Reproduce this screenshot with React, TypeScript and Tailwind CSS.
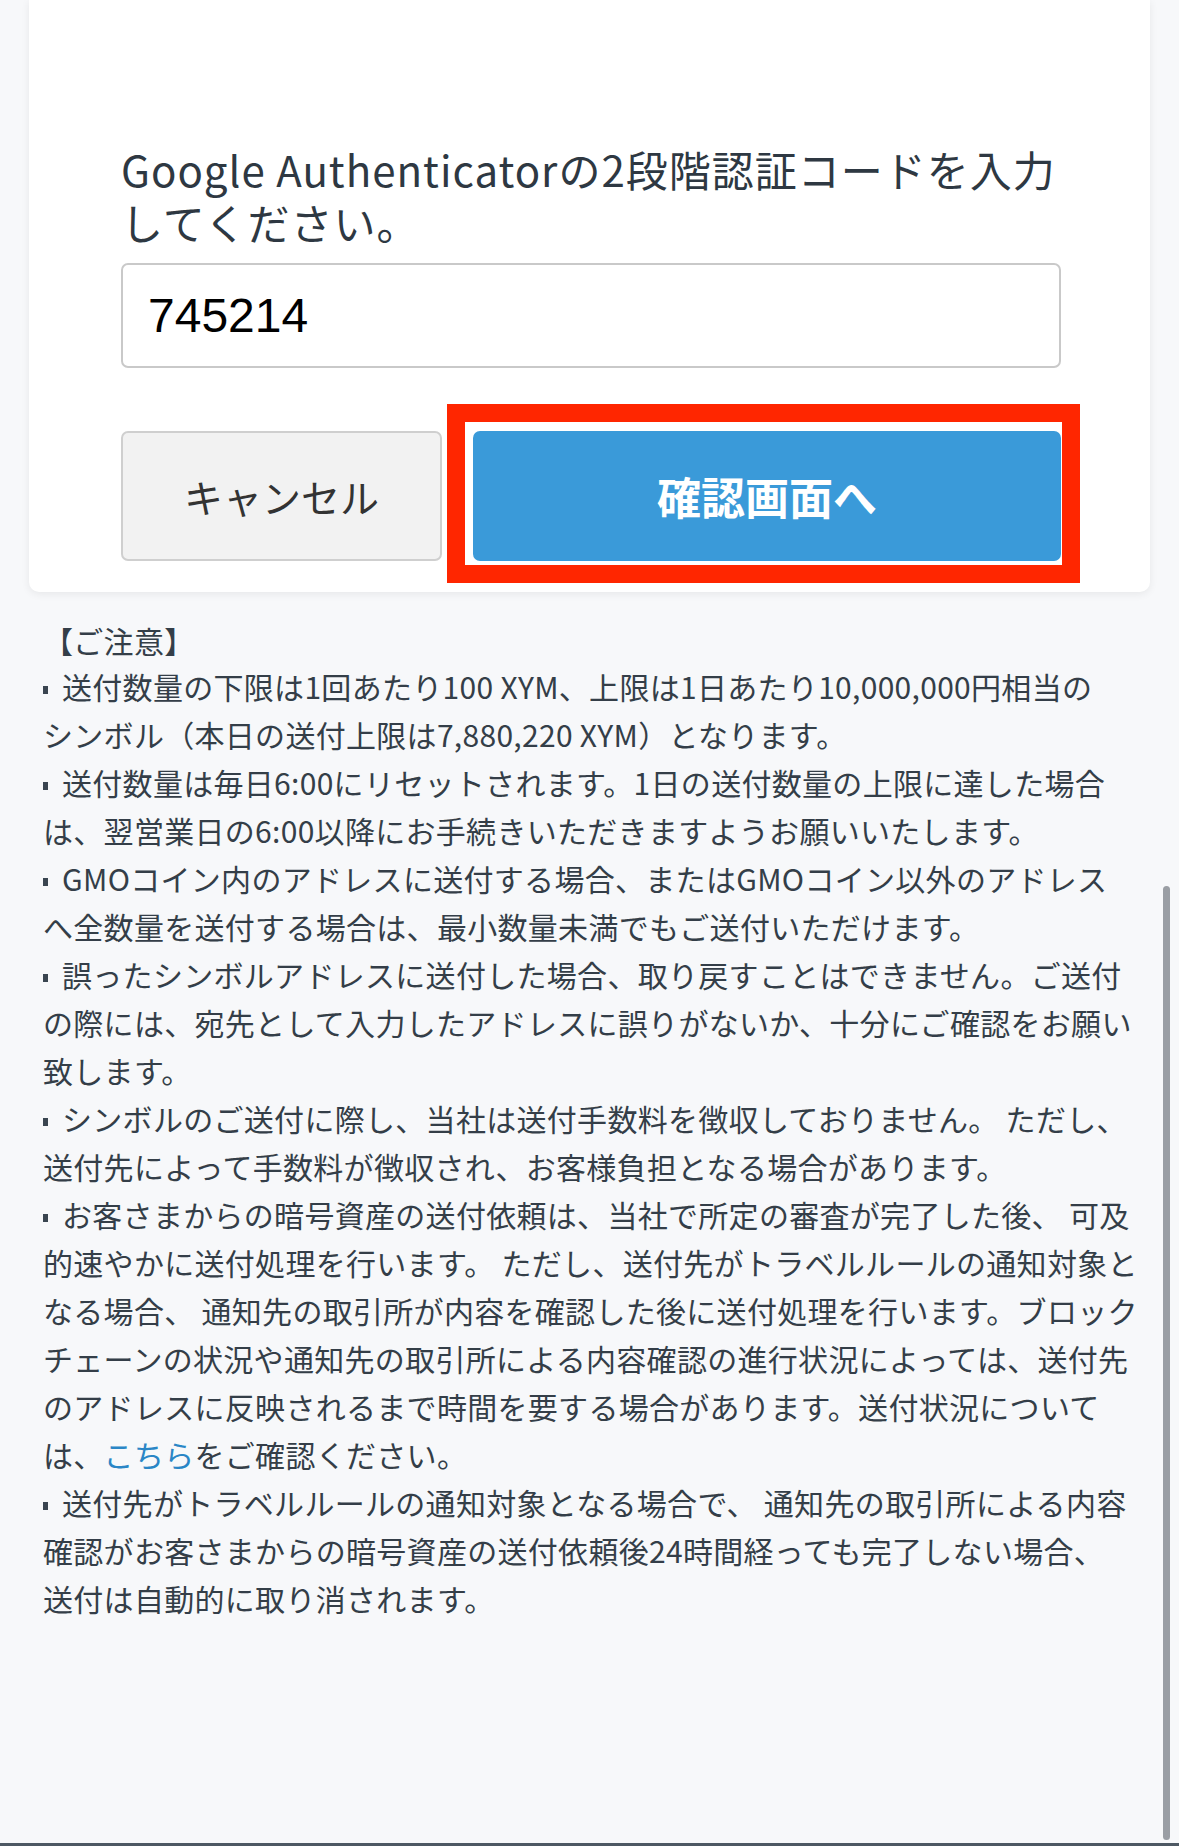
import React from "react";

const Bullet = () => (
  <span className="inline-block w-[5px] h-[8px] bg-[#3a4550] align-middle mr-[14px] relative -top-[1px]" />
);

const lines: { b?: boolean; t: React.ReactNode }[] = [
  { b: true, t: "送付数量の下限は1回あたり100 XYM、上限は1日あたり10,000,000円相当の" },
  { t: "シンボル（本日の送付上限は7,880,220 XYM）となります。" },
  { b: true, t: "送付数量は毎日6:00にリセットされます。1日の送付数量の上限に達した場合" },
  { t: "は、翌営業日の6:00以降にお手続きいただきますようお願いいたします。" },
  { b: true, t: "GMOコイン内のアドレスに送付する場合、またはGMOコイン以外のアドレス" },
  { t: "へ全数量を送付する場合は、最小数量未満でもご送付いただけます。" },
  { b: true, t: "誤ったシンボルアドレスに送付した場合、取り戻すことはできません。ご送付" },
  { t: "の際には、宛先として入力したアドレスに誤りがないか、十分にご確認をお願い" },
  { t: "致します。" },
  { b: true, t: "シンボルのご送付に際し、当社は送付手数料を徴収しておりません。 ただし、" },
  { t: "送付先によって手数料が徴収され、お客様負担となる場合があります。" },
  { b: true, t: "お客さまからの暗号資産の送付依頼は、当社で所定の審査が完了した後、 可及" },
  { t: "的速やかに送付処理を行います。 ただし、送付先がトラベルルールの通知対象と" },
  { t: "なる場合、 通知先の取引所が内容を確認した後に送付処理を行います。ブロック" },
  { t: "チェーンの状況や通知先の取引所による内容確認の進行状況によっては、送付先" },
  { t: "のアドレスに反映されるまで時間を要する場合があります。送付状況について" },
  {
    t: (
      <>
        は、<span className="text-[#2a86c6]">こちら</span>をご確認ください。
      </>
    ),
  },
  { b: true, t: "送付先がトラベルルールの通知対象となる場合で、 通知先の取引所による内容" },
  { t: "確認がお客さまからの暗号資産の送付依頼後24時間経っても完了しない場合、" },
  { t: "送付は自動的に取り消されます。" },
];

export default function App() {
  return (
    <div
      className="relative w-[1179px] h-[1846px] overflow-hidden bg-[#f7f8fa]"
      style={{ fontFamily: '"Noto Sans CJK JP", "Noto Sans", sans-serif' }}
    >
      {/* Card */}
      <div className="mx-[29px] bg-white rounded-b-[10px] shadow-[0_2px_8px_rgba(0,0,0,0.07)] pt-[142px] pl-[92px] pr-[89px] pb-[31px]">
        <div className="text-[42px] leading-[53px] tracking-[1px] text-[#2e3842] whitespace-nowrap">
          Google Authenticatorの2段階認証コードを入力
          <br />
          してください。
        </div>
        <div className="mt-[15px] h-[105px] border-2 border-[#c9c9c9] rounded-[7px] bg-white flex items-center pl-[25px]">
          <span
            className="text-[48px] text-black"
            style={{ fontFamily: '"Liberation Sans", Arial, sans-serif' }}
          >
            745214
          </span>
        </div>
        <div className="mt-[63px] flex gap-[31px] h-[130px]">
          <button className="w-[321px] h-full bg-[#f2f2f2] border-2 border-[#cfcfcf] rounded-[7px] text-[39px] text-[#333333] flex items-center justify-center">
            キャンセル
          </button>
          <button className="flex-1 h-full bg-[#3a9ad9] rounded-[7px] text-[44px] font-bold text-white flex items-center justify-center">
            確認画面へ
          </button>
        </div>
      </div>

      {/* Notes */}
      <div className="pl-[43px] pr-[30px] mt-[26px] text-[30px] tracking-[0.3px] text-[#343e48] whitespace-nowrap">
        <div className="leading-[44px]">【ご注意】</div>
        {lines.map((l, i) => (
          <div key={i} className="leading-[48px]">
            {l.b && <Bullet />}
            {l.t}
          </div>
        ))}
      </div>

      {/* Red annotation box */}
      <div className="absolute left-[447px] top-[404px] w-[633px] h-[179px] border-[18px] border-[#ff2600]" />

      {/* Scroll indicator */}
      <div className="absolute right-[9px] top-[886px] w-[7px] h-[954px] rounded-full bg-[#9a9ea4]" />

      {/* bottom edge */}
      <div className="absolute left-0 right-0 bottom-0 h-[3px] bg-[#4d5863]" />
    </div>
  );
}
